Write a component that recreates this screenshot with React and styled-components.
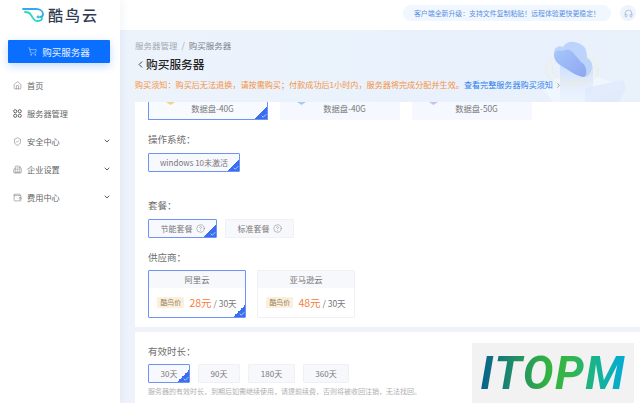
import styled, { createGlobalStyle } from 'styled-components'
import { House, ShoppingCart, ChevronDown, ChevronLeft, ChevronRight, ShieldCheck, Building2, Wallet, Headphones, CircleHelp, Check } from 'lucide-react'

const Global = createGlobalStyle`
html,body{margin:0;padding:0;background:#fff}
*{box-sizing:border-box}
body{font-family:"Noto Sans CJK SC","Noto Sans",sans-serif;color:#666}
`
const Page = styled.div`display:flex;width:640px;height:403px;overflow:hidden;position:relative;`
const Side = styled.aside`width:120px;flex:none;background:#fff;box-shadow:2px 0 8px rgba(40,70,130,.06);z-index:2;`
const Logo = styled.div`height:40px;display:flex;align-items:flex-start;padding:7px 0 0 22px;gap:4px;
span{font-size:15px;line-height:16px;font-weight:500;color:#2f3b52;letter-spacing:2px}`
const BuyBtn = styled.div`margin:0 10px 0 8px;height:23px;background:#0a6fff;color:#e8f1ff;font-size:9.5px;display:flex;align-items:center;justify-content:center;gap:5px;box-shadow:0 3px 8px rgba(10,111,255,.25);border-radius:1px;`
const Menu = styled.ul`list-style:none;margin:8px 0 0;padding:0;`
const Item = styled.li`height:28px;display:flex;align-items:center;padding:0 9px 0 13px;font-size:8.2px;color:#666;gap:5px;
b{font-weight:400;flex:1}`
const Main = styled.main`flex:1;min-width:0;display:flex;flex-direction:column;`
const Top = styled.header`height:30px;flex:none;display:flex;justify-content:flex-end;align-items:flex-start;padding:5px 4px 0 0;gap:9px;background:#fff;`
const Notice = styled.div`width:208px;height:16px;border-radius:8px;background:#f1f7ff;color:#5a90e2;font-size:6.9px;line-height:16px;text-align:center;white-space:nowrap;`
const Round = styled.div`width:16px;height:16px;border-radius:50%;background:#eef4fd;color:#8ea3c0;display:flex;align-items:center;justify-content:center;`
const Banner = styled.section`height:72px;flex:none;position:relative;padding:9px 0 0 15px;overflow:hidden;background:linear-gradient(90deg,#edf3fb 0,#eaf2fc 40%,#e8f1fc 70%,#e9f1fb 100%);`
const Crumb = styled.div`font-size:8.5px;line-height:12px;color:#a3a9b2;span{color:#7b828e}i{font-style:normal;margin:0 4px}`
const Title = styled.h1`margin:5px 0 0;display:flex;align-items:center;gap:0;font-size:11.7px;line-height:16px;font-weight:500;color:#222;`
const Tip = styled.p`margin:7px 0 0;font-size:8.12px;line-height:12px;color:#f5923e;white-space:nowrap;position:relative;z-index:1;
a{color:#2f7fe8;font-size:8.1px}`
const Cloud = styled.svg`position:absolute;right:10px;top:6px;`
const Body = styled.div`flex:1;min-height:0;padding-left:15px;background:#eef2fa;display:flex;flex-direction:column;`
const Card = styled.div`background:#fff;padding:0 0 0 13px;`
const First = styled(Card)`height:225px;flex:none;`
const Second = styled(Card)`flex:1;margin-top:5px;padding-top:12px;`
const DiskRow = styled.div`display:flex;gap:12px;height:18px;`
const Disk = styled.div`position:relative;width:120px;height:18px;font-size:8.3px;line-height:11px;text-align:center;padding:1px 0 0 9px;color:#777;
background:${p=>p.$on?'#f7faff':'#f5f9ff'};
${p=>p.$on?'border:1px solid #6f93f3;border-top:0;':''}`
const DiskTip = styled.i`position:absolute;left:17px;top:0;width:9px;height:3px;background:${p=>p.$c};clip-path:polygon(0 0,100% 0,50% 100%);`
const Label = styled.div`font-size:9.5px;line-height:14px;color:#6e6e6e;margin:${p=>p.$m||'0'};`
const Row = styled.div`display:flex;gap:${p=>p.$gap||8}px;`
const Opt = styled.div`position:relative;width:${p=>p.$w}px;height:19px;display:flex;align-items:center;justify-content:center;gap:3px;font-size:8px;color:#777;white-space:nowrap;
background:${p=>p.$on?'#f7f9fe':'#f7f8fb'};border:1px solid ${p=>p.$on?'#6f93f3':'#f0f1f5'};border-radius:1px;`
const Corner = styled.span`position:absolute;right:0;bottom:0;width:12px;height:12px;background:linear-gradient(135deg,transparent 50%,#3a6ef0 50%);color:#fff;
svg{position:absolute;right:0;bottom:0}`
const Provider = styled.div`position:relative;width:98px;height:48px;border:1px solid ${p=>p.$on?'#6f93f3':'#f0f1f5'};border-radius:1px;`
const ProvHead = styled.div`height:17px;background:#f6f8fb;text-align:center;font-size:8.3px;line-height:17px;color:#777;`
const Price = styled.div`height:29px;display:flex;align-items:center;justify-content:center;gap:5px;font-size:8.5px;color:#777;white-space:nowrap;
em{font-style:normal;font-size:7px;line-height:11px;padding:0 3px;background:#fbf0dc;color:#97825f;border-radius:1px}
strong{font-weight:400;font-size:10.5px;color:#f5803e}`
const Note = styled.p`margin:3px 0 0;font-size:7px;line-height:11px;color:#b0b0b0;white-space:nowrap;`
const Mark = styled.div`position:absolute;left:472px;top:343px;width:162px;height:60px;background:#f2f2f2;display:flex;align-items:center;justify-content:center;z-index:3;
span{font-family:Roboto,sans-serif;font-weight:700;font-style:italic;font-size:46px;letter-spacing:1.5px;line-height:60px;background:linear-gradient(90deg,#05608e 0,#1f8a6a 22%,#34b43f 48%,#35b54c 62%,#12b39a 82%,#03a9dc 100%);-webkit-background-clip:text;background-clip:text;color:transparent;}`

// full width punctuation, written as escapes
const COLON = '\uFF1A', COMMA = '\uFF0C', SEMI = '\uFF1B', BANG = '\uFF01', STOP = '\u3002'
const noticeText = '客户端全新升级' + COLON + '支持文件复制粘贴' + BANG + '远程体验更快更稳定' + BANG
const tipText = '购买须知' + COLON + '购买后无法退换' + COMMA + '请按需购买' + SEMI + '付款成功后1小时内' + COMMA + '服务器将完成分配并生效' + STOP
const noteText = '服务器的有效时长' + COMMA + '到期后如需继续使用' + COMMA + '请提前续费' + COMMA + '否则将被收回注销' + COMMA + '无法找回' + STOP

const Tick = () => <Corner><Check size={6} strokeWidth={2.5} /></Corner>
const menus = [
  { icon: House, name: '首页' },
  { icon: null, name: '服务器管理' },
  { icon: ShieldCheck, name: '安全中心', more: true },
  { icon: Building2, name: '企业设置', more: true },
  { icon: Wallet, name: '费用中心', more: true },
]
const Grid = () => (
  <svg width="9" height="9" viewBox="0 0 8 8" fill="none" stroke="#555" strokeWidth=".8">
    <circle cx="2" cy="2" r="1.4" /><circle cx="6" cy="2" r="1.4" /><circle cx="2" cy="6" r="1.4" /><circle cx="6" cy="6" r="1.4" />
  </svg>
)

export default function App() {
  return (
    <Page>
      <Global />
      <Side>
        <Logo>
          <svg width="22" height="15" viewBox="0 0 22 15" fill="none" strokeLinecap="round" strokeLinejoin="round">
            <path d="M1 2h13c4 0 7 2 7 5 0 2-1 3-3 3" stroke="#35a9f0" strokeWidth="1.8" />
            <path d="M3 5c3 0 5 1 6 3 2 3 3 6 6 6 3 0 5-1 5-3" stroke="#2fd6c4" strokeWidth="1.8" />
            <circle cx="16" cy="10" r="1.4" fill="#38c8e0" />
          </svg>
          <span>酷鸟云</span>
        </Logo>
        <BuyBtn><ShoppingCart size={9} strokeWidth={1.3} />购买服务器</BuyBtn>
        <Menu>
          {menus.map(m => (
            <Item key={m.name}>
              {m.icon ? <m.icon size={9} strokeWidth={1.3} /> : <Grid />}
              <b>{m.name}</b>
              {m.more && <ChevronDown size={8} strokeWidth={2.4} color="#333" />}
            </Item>
          ))}
        </Menu>
      </Side>
      <Main>
        <Top>
          <Notice>{noticeText}</Notice>
          <Round><Headphones size={9} strokeWidth={1.5} /></Round>
        </Top>
        <Banner>
          <Crumb>服务器管理<i>/</i><span>购买服务器</span></Crumb>
          <Title><ChevronLeft size={11} strokeWidth={1.8} />购买服务器</Title>
          <Tip>{tipText}<a>查看完整服务器购买须知</a> <ChevronRight size={7} color="#667" style={{verticalAlign:'-1px'}} /></Tip>
          <Cloud width="90" height="68" viewBox="0 0 90 68" fill="none">
            <defs>
              <linearGradient id="cy" x1="0" y1="0" x2="0" y2="1">
                <stop offset="0" stopColor="#cfe0fc" />
                <stop offset="1" stopColor="#e6f0fd" stopOpacity=".3" />
              </linearGradient>
              <linearGradient id="cl" x1="0" y1="0" x2="1" y2="1">
                <stop offset="0" stopColor="#a6c6fb" />
                <stop offset="1" stopColor="#8ea6f0" />
              </linearGradient>
            </defs>
            <path d="M0 50 35 34l50 16-40 18H15z" fill="#f0f6fe" />
            <path d="M45 68V52l38-8 3 8-8 16z" fill="#dfeafc" opacity=".8" />
            <rect x="20" y="30" width="33" height="38" fill="url(#cy)" />
            <ellipse cx="32" cy="34" rx="26" ry="16" stroke="#f5ebc4" strokeWidth=".8" />
            <ellipse cx="32" cy="33" rx="20" ry="12" stroke="#f5ebc4" strokeWidth=".8" />
            <path d="M14 17C14 11 19 9 23 11C25 7 30 5 34 6C41 7 46 11 46 15C47 18 47 20 47 22C51 24 53 28 52 32C51 38 47 42 43 41C38 40 33 37 33 37L20 29C16 26 14 22 14 17z" fill="#bcd4fb" />
            <path d="M14 19C15 14 19 14 23 15C27 12 32 14 35 19C38 22 40 25 41 26C45 28 47 33 46 38C46 40 44 41 43 41C38 40 33 37 33 37L20 29C16 26 14 23 14 19z" fill="url(#cl)" />
          </Cloud>
        </Banner>
        <Body>
          <First>
            <DiskRow>
              <Disk $on><DiskTip $c="#f3d38a" />数据盘-40G<Tick /></Disk>
              <Disk><DiskTip $c="#a9c8f5" />数据盘-40G</Disk>
              <Disk><DiskTip $c="#c9bff0" />数据盘-50G</Disk>
            </DiskRow>
            <Label $m="12px 0 7px">{'操作系统' + COLON}</Label>
            <Row><Opt $w={92} $on>windows 10未激活<Tick /></Opt></Row>
            <Label $m="26px 0 7px">{'套餐' + COLON}</Label>
            <Row>
              <Opt $w={69} $on>节能套餐 <CircleHelp size={9} strokeWidth={1.2} /><Tick /></Opt>
              <Opt $w={69}>标准套餐 <CircleHelp size={9} strokeWidth={1.2} /></Opt>
            </Row>
            <Label $m="12px 0 6px">{'供应商' + COLON}</Label>
            <Row $gap={11}>
              <Provider $on>
                <ProvHead>阿里云</ProvHead>
                <Price><em>酷鸟价</em><span><strong>28元</strong> / 30天</span></Price>
                <Tick />
              </Provider>
              <Provider>
                <ProvHead>亚马逊云</ProvHead>
                <Price><em>酷鸟价</em><span><strong>48元</strong> / 30天</span></Price>
              </Provider>
            </Row>
          </First>
          <Second>
            <Label $m="0 0 6px">{'有效时长' + COLON}</Label>
            <Row>
              <Opt $w={42} $on>30天<Tick /></Opt>
              <Opt $w={42}>90天</Opt>
              <Opt $w={47}>180天</Opt>
              <Opt $w={46}>360天</Opt>
            </Row>
            <Note>{noteText}</Note>
          </Second>
        </Body>
      </Main>
      <Mark><span>ITOPM</span></Mark>
    </Page>
  )
}
